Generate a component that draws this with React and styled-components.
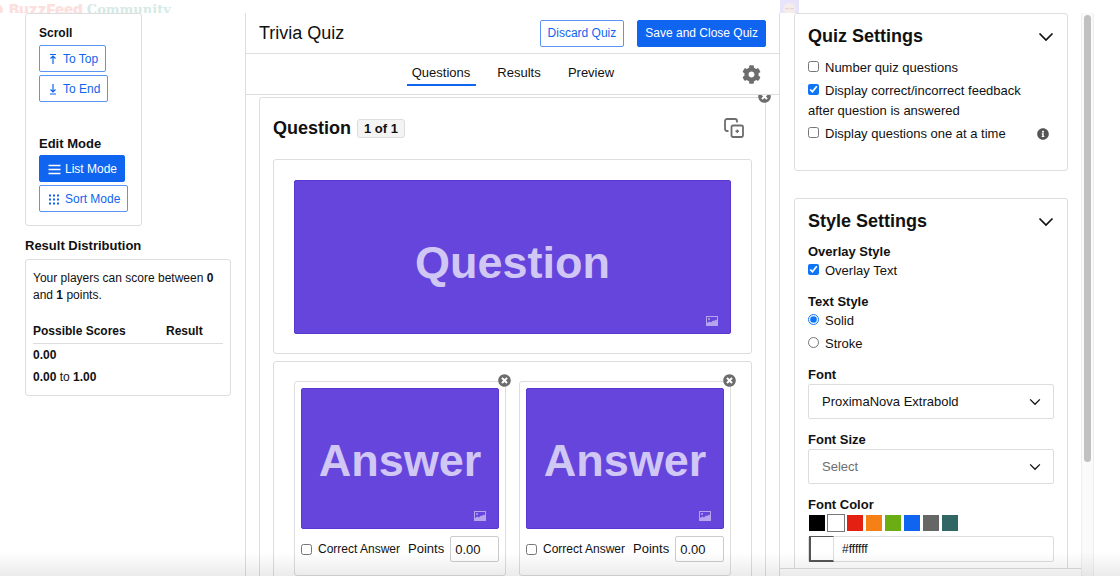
import { useState } from 'react';
import styled, { createGlobalStyle } from 'styled-components';
import { FaCog, FaInfoCircle, FaTimesCircle } from 'react-icons/fa';

//#region --- Styled Components ---
const GlobalStyle = createGlobalStyle`
  *, *::before, *::after {
    box-sizing: border-box;
  }

  body {
    margin: 0;
    background: #fff;
    color: #111;
    font-family: "Liberation Sans", Arial, Helvetica, sans-serif;
    font-size: 13px;
    line-height: 20px;
  }

  h1, h2, h3, h4, p {
    margin: 0;
  }

  button, input, select {
    font-family: inherit;
    color: inherit;
  }
`;

const Page = styled.div`
  position: relative;
  display: flex;
  flex-direction: column;
  height: 100vh;
  overflow: hidden;
`;

const SiteHeader = styled.header`
  display: flex;
  justify-content: space-between;
  flex: 0 0 13px;
  padding-right: 321px;
  overflow: hidden;
`;

const Brand = styled.a`
  display: flex;
  align-items: center;
  gap: 6px;
  height: 19px;
  color: #fce0de;
  font-size: 15px;
  font-weight: 700;
  text-decoration: none;

  svg {
    margin-left: -9px;
  }
  strong {
    font-family: Inter, "Liberation Sans", sans-serif;
    font-weight: 900;
  }
  span {
    margin-left: -2px;
    color: #d5eae6;
    font-family: "DejaVu Serif", serif;
    font-size: 13px;
  }
`;

const Columns = styled.div`
  display: flex;
  flex: 1;
  min-height: 0;
`;

const Sidebar = styled.aside`
  flex: 0 0 245px;
  padding: 0 14px 0 25px;
`;

const Box = styled.section`
  border: 1px solid #ddd;
  border-radius: 3px;
`;

const ToolBox = styled(Box)`
  display: flex;
  flex-direction: column;
  gap: 33px;
  width: 117px;
  padding: 11px 13px 13px;
`;

const ToolGroup = styled.div`
  display: flex;
  flex-direction: column;
  align-items: flex-start;
  gap: 3px;
`;

const ToolTitle = styled.h4`
  font-size: ${({ $small }) => ($small ? 12 : 13)}px;
  line-height: 17px;
`;

const Button = styled.button`
  display: inline-flex;
  align-items: center;
  gap: 4px;
  height: 27px;
  padding: 0 7px;
  border: 1px solid ${({ $filled }) => ($filled ? '#0f65ef' : '#5a95f4')};
  border-radius: 2px;
  background: ${({ $filled }) => ($filled ? '#0f65ef' : '#fff')};
  color: ${({ $filled }) => ($filled ? '#fff' : '#0f65ef')};
  font-size: 12px;
  white-space: nowrap;
  cursor: pointer;
`;

const SectionTitle = styled.h3`
  margin: 11px 0 4px;
  font-size: 13px;
  line-height: 18px;
`;

const ResultBox = styled(Box)`
  padding: 10px 7px 7px;
  font-size: 12px;
  line-height: 17px;
`;

const ScoreTable = styled.table`
  width: 100%;
  margin-top: 18px;
  border-collapse: collapse;
  text-align: left;

  th {
    padding: 1px 0 3px;
    border-bottom: 1px solid #ddd;
  }
  th:first-child {
    width: 70%;
  }
  td {
    padding: 3px 0 2px;
  }
`;

const Editor = styled.main`
  display: flex;
  flex-direction: column;
  flex: 1;
  min-width: 0;
  border: 1px solid #ddd;
  border-width: 0 1px;
`;

const TitleBar = styled.div`
  display: flex;
  align-items: center;
  gap: 13px;
  flex: 0 0 41px;
  padding: 0 13px;
  border-bottom: 1px solid #ddd;

  h1 {
    flex: 1;
    font-size: 18px;
    font-weight: 400;
  }
`;

const TabBar = styled.nav`
  display: flex;
  align-items: center;
  flex: 0 0 41px;
  padding: 0 18px;
  border-bottom: 1px solid #ddd;
`;

const Tabs = styled.div`
  display: flex;
  flex: 1;
  justify-content: center;
  gap: 15px;
  padding-left: 20px;
`;

const Tab = styled.a`
  min-width: ${({ $wide }) => ($wide ? 69 : 57)}px;
  padding: 0 4px 1px;
  border-bottom: 2px solid ${({ $active }) => ($active ? '#0f65ef' : 'transparent')};
  color: #111;
  line-height: 20px;
  text-align: center;
  text-decoration: none;
`;

const IconButton = styled.button`
  display: flex;
  padding: 0;
  border: 0;
  background: none;
  color: ${({ $color }) => $color || '#6d6d6d'};
  cursor: pointer;
`;

const Canvas = styled.div`
  flex: 1;
  min-height: 0;
  padding: 2px 13px 0;
  overflow: hidden;
`;

const Question = styled(Box)`
  position: relative;
  display: flex;
  flex-direction: column;
  gap: 7px;
  min-height: 600px;
  padding: 0 13px;
`;

const Remove = styled(IconButton)`
  position: absolute;
  top: -8px;
  right: -6px;
  border-radius: 50%;
  background: #fff;
`;

const QuestionHeader = styled.div`
  display: flex;
  align-items: center;
  gap: 6px;
  height: 54px;
  padding: 6px 8px 0 0;

  h2 {
    font-size: 18px;
  }
`;

const Count = styled.span`
  padding: 0 6px;
  border: 1px solid #ddd;
  border-radius: 3px;
  background: #f4f4f4;
  font-weight: 700;
  line-height: 17px;
`;

const Spacer = styled.div`
  flex: 1;
`;

const Panel = styled(Box)`
  padding: 20px 20px 19px;
`;

const Answers = styled(Panel)`
  display: grid;
  grid-template-columns: 1fr 1fr;
  gap: 13px;
  padding-top: 19px;
`;

const AnswerCard = styled(Box)`
  position: relative;
  padding: 6px 6px 13px;
`;

const Tile = styled.div`
  position: relative;
  display: flex;
  align-items: center;
  justify-content: center;
  height: ${({ $height }) => $height}px;
  padding-top: ${({ $shift }) => $shift}px;
  border: 1px solid #5938d0;
  border-radius: 2px;
  background: #6645dc;
  color: #d1c7f5;
  font-size: 45px;
  font-weight: 700;
  line-height: 56px;

  svg {
    position: absolute;
    right: 12px;
    bottom: 7px;
  }
`;

const AnswerFooter = styled.div`
  display: flex;
  align-items: center;
  gap: 8px;
  padding-top: 7px;
  white-space: nowrap;
`;

const CheckLabel = styled.label`
  display: flex;
  align-items: center;
  gap: 6px;
  font-size: 12px;
`;

const PointsLabel = styled.label`
  display: flex;
  flex: 1;
  align-items: center;
  gap: 6px;

  input {
    flex: 1;
    min-width: 0;
    width: 0;
    height: 26px;
    padding: 0 4px;
    border: 1px solid #ccc;
    border-radius: 2px;
    font-size: 13px;
  }
`;

const Check = styled.input`
  width: 11px;
  height: 11px;
  margin: 0;
  accent-color: #0f75f5;
`;

const Settings = styled.aside`
  display: flex;
  flex-direction: column;
  flex: 0 0 301px;
  gap: 27px;
  margin-bottom: 7px;
  padding: 0 13px 0 14px;
  border-bottom: 1px solid #ddd;
  overflow: hidden;
`;

const SettingsBox = styled(Box)`
  flex-shrink: 0;
  min-height: ${({ $height }) => $height}px;
  padding: 10px 13px;
`;

const SettingsTitle = styled.div`
  display: flex;
  align-items: center;
  justify-content: space-between;
  margin-bottom: 9px;

  h2 {
    font-size: 18px;
    line-height: 25px;
  }
`;

const Option = styled.div`
  display: flex;
  align-items: flex-start;
  margin-bottom: 3px;
  padding-right: 5px;

  label {
    flex: 1;
  }
  input {
    margin-right: 6px;
  }
  > svg {
    margin-top: 4px;
    color: #555;
  }
`;

const Field = styled.div`
  margin-bottom: 12px;

  h3, > label {
    display: block;
    font-size: 13px;
    font-weight: 700;
    line-height: 18px;
  }
`;

const SelectWrap = styled.div`
  display: flex;
  align-items: center;
  height: 35px;
  padding-right: 12px;
  border: 1px solid #ddd;
  border-radius: 2px;

  select {
    flex: 1;
    height: 100%;
    padding: 0 13px;
    border: 0;
    background: none;
    color: ${({ $muted }) => ($muted ? '#6d6d6d' : '#111')};
    font-size: 13px;
    appearance: none;
  }
`;

const Swatches = styled.div`
  display: flex;
  gap: 1px;
  height: 19px;
`;

const Swatch = styled.button`
  width: 18px;
  height: 18px;
  padding: 0;
  border: 1px solid ${({ $active }) => ($active ? '#777' : '#fff')};
  background: ${({ $color }) => $color};
  cursor: pointer;
`;

const HexRow = styled.div`
  display: flex;
  height: 26px;
  margin-top: 3px;
  border: 1px solid #ddd;
  border-radius: 2px;

  input {
    flex: 1;
    min-width: 0;
    padding: 0 8px;
    border: 0;
    background: none;
    font-size: 12px;
  }
`;

const HexPreview = styled.div`
  width: 25px;
  margin: -1px 0;
  border: 2px solid #555;
  border-width: 1px 1px 2px 2px;
  border-right-color: #ddd;
  background: #fff;
`;

const ScrollTrack = styled.div`
  flex: 0 0 13px;
  margin-right: 26px;
  padding: 2px;
  border: 1px solid #eee;
  border-width: 0 1px;
  background: #fafafa;
`;

const ScrollThumb = styled.div`
  height: 80%;
  border-radius: 4px;
  background: #c1c1c1;
`;

const BottomFade = styled.div`
  position: absolute;
  right: 0;
  bottom: 0;
  left: 0;
  height: 24px;
  background: linear-gradient(rgba(0, 0, 0, 0), rgba(0, 0, 0, 0.08));
  pointer-events: none;
`;
//#endregion

//#region --- Icons ---
const ArrowIcon = ({ down }) => (
  <svg width="12" height="12" viewBox="0 0 12 12" fill="none" stroke="currentColor" strokeWidth="1.2">
    {down ? (
      <path d="M6 1v8M3.5 6.5 6 9l2.5-2.5M3 11h6" />
    ) : (
      <path d="M6 11V3M3.5 5.5 6 3l2.5 2.5M3 1.5h6" />
    )}
  </svg>
);

const ListIcon = () => (
  <svg width="14" height="12" viewBox="0 0 14 12" stroke="currentColor" strokeWidth="1.4">
    <path d="M1.5 2.5h12M1.5 6.5h12M1.5 10.5h12" />
  </svg>
);

const GridIcon = () => (
  <svg width="14" height="12" viewBox="0 0 14 12" stroke="currentColor" strokeWidth="2" strokeDasharray="2 2">
    <path d="M2 2.5h10M2 6.5h10M2 10.5h10" />
  </svg>
);

const Chevron = ({ size = 16, width = 1.7 }) => (
  <svg width={size} height={size} viewBox="0 0 16 16" fill="none" stroke="currentColor" strokeWidth={width} aria-hidden="true">
    <path d="m1.5 4.500 6.500 6.500 6.500-6.500" />
  </svg>
);

const DuplicateIcon = () => (
  <svg width="20" height="20" viewBox="0 0 20 20" fill="none" stroke="currentColor" strokeWidth="1.8">
    <path d="M4.500 13H3a2 2 0 0 1-2-2V3a2 2 0 0 1 2-2h8a2 2 0 0 1 2 2v1.500" />
    <rect x="7.500" y="7.500" width="11.500" height="11.500" rx="1.500" />
    <path d="M13.250 11.500v3.500M11.500 13.250H15" strokeWidth="1.400" />
  </svg>
);

const PictureIcon = () => (
  <svg width="12" height="10" viewBox="0 0 12 10" fill="none">
    <rect x=".5" y=".5" width="11" height="9" stroke="#b5a4ee" />
    <path d="M1 9V7L3.500 5.500 5 6.500l2-2 1 .5 2-1.500 1 1V9z" fill="#b5a4ee" />
    <circle cx="3" cy="3" r="1" fill="#b5a4ee" />
  </svg>
);
//#endregion

const COLORS = ['#000000', '#ffffff', '#e32012', '#f48016', '#6aae14', '#0f65ef', '#666666', '#306764'];

function Answer({ id }) {
  return (
    <AnswerCard>
      <Remove type="button" aria-label="Remove answer"><FaTimesCircle size={13} /></Remove>
      <Tile $height={141} $shift={5}>
        Answer
        <PictureIcon />
      </Tile>
      <AnswerFooter>
        <CheckLabel>
          <Check type="checkbox" id={`correct-${id}`} />
          Correct Answer
        </CheckLabel>
        <PointsLabel>
          Points
          <input type="text" defaultValue="0.00" />
        </PointsLabel>
      </AnswerFooter>
    </AnswerCard>
  );
}

export default function App() {
  const [color, setColor] = useState('#ffffff');

  return (
    <Page>
      <GlobalStyle />

      <SiteHeader>
        <Brand href="#">
          <svg width="12" height="12" viewBox="0 0 12 12">
            <circle cx="6" cy="6" r="6" fill="#fce0de" />
            <path d="m3 8 2-3 1 2 3-4" fill="none" stroke="#fff" />
          </svg>
          <strong>BuzzFeed</strong>
          <span>Community</span>
        </Brand>
        <svg width="19" height="13" viewBox="0 0 19 13">
          <path fill="#e7e3fa" d="M0 0h19v13H0z" />
          <ellipse cx="9.500" cy="9" rx="6.500" ry="6" fill="#f4edec" />
          <path d="M5 9q2-1.500 4 0M10 9q2-1.500 4 0" fill="none" stroke="#ddd3d3" />
        </svg>
      </SiteHeader>

      <Columns>
        <Sidebar>
          <ToolBox>
            <ToolGroup>
              <ToolTitle $small>Scroll</ToolTitle>
              <Button type="button"><ArrowIcon /> To Top</Button>
              <Button type="button"><ArrowIcon down /> To End</Button>
            </ToolGroup>
            <ToolGroup>
              <ToolTitle>Edit Mode</ToolTitle>
              <Button type="button" $filled><ListIcon /> List Mode</Button>
              <Button type="button"><GridIcon /> Sort Mode</Button>
            </ToolGroup>
          </ToolBox>

          <SectionTitle>Result Distribution</SectionTitle>
          <ResultBox>
            <p>Your players can score between <b>0</b> and <b>1</b> points.</p>
            <ScoreTable>
              <thead>
                <tr><th>Possible Scores</th><th>Result</th></tr>
              </thead>
              <tbody>
                <tr><td><b>0.00</b></td><td /></tr>
                <tr><td><b>0.00</b> to <b>1.00</b></td><td /></tr>
              </tbody>
            </ScoreTable>
          </ResultBox>
        </Sidebar>

        <Editor>
          <TitleBar>
            <h1>Trivia Quiz</h1>
            <Button type="button">Discard Quiz</Button>
            <Button type="button" $filled>Save and Close Quiz</Button>
          </TitleBar>
          <TabBar>
            <Tabs>
              <Tab href="#questions" $active $wide>Questions</Tab>
              <Tab href="#results">Results</Tab>
              <Tab href="#preview">Preview</Tab>
            </Tabs>
            <IconButton type="button" aria-label="Options"><FaCog size={19} /></IconButton>
          </TabBar>

          <Canvas>
            <Question>
              <Remove type="button" aria-label="Remove question"><FaTimesCircle size={13} /></Remove>
              <QuestionHeader>
                <h2>Question</h2>
                <Count>1 of 1</Count>
                <Spacer />
                <IconButton type="button" aria-label="Duplicate question"><DuplicateIcon /></IconButton>
              </QuestionHeader>
              <Panel>
                <Tile $height={154} $shift={12}>
                  Question
                  <PictureIcon />
                </Tile>
              </Panel>
              <Answers>
                <Answer id="a" />
                <Answer id="b" />
              </Answers>
            </Question>
          </Canvas>
        </Editor>

        <Settings>
          <SettingsBox $height={158}>
            <SettingsTitle>
              <h2>Quiz Settings</h2>
              <IconButton type="button" $color="#111" aria-label="Toggle quiz settings"><Chevron /></IconButton>
            </SettingsTitle>
            <Option>
              <label><Check type="checkbox" />Number quiz questions</label>
            </Option>
            <Option>
              <label><Check type="checkbox" defaultChecked />Display correct/incorrect feedback after question is answered</label>
            </Option>
            <Option>
              <label><Check type="checkbox" />Display questions one at a time</label>
              <FaInfoCircle size={12} />
            </Option>
          </SettingsBox>

          <SettingsBox $height={420}>
            <SettingsTitle>
              <h2>Style Settings</h2>
              <IconButton type="button" $color="#111" aria-label="Toggle style settings"><Chevron /></IconButton>
            </SettingsTitle>
            <Field>
              <h3>Overlay Style</h3>
              <Option>
                <label><Check type="checkbox" defaultChecked />Overlay Text</label>
              </Option>
            </Field>
            <Field>
              <h3>Text Style</h3>
              <Option>
                <label><Check type="radio" name="text-style" defaultChecked />Solid</label>
              </Option>
              <Option>
                <label><Check type="radio" name="text-style" />Stroke</label>
              </Option>
            </Field>
            <Field>
              <label htmlFor="font">Font</label>
              <SelectWrap>
                <select id="font"><option>ProximaNova Extrabold</option></select>
                <Chevron size={12} />
              </SelectWrap>
            </Field>
            <Field>
              <label htmlFor="font-size">Font Size</label>
              <SelectWrap $muted>
                <select id="font-size"><option>Select</option></select>
                <Chevron size={12} />
              </SelectWrap>
            </Field>
            <Field>
              <label htmlFor="font-color">Font Color</label>
              <Swatches>
                {COLORS.map((c) => (
                  <Swatch
                    key={c}
                    type="button"
                    aria-label={c}
                    $color={c}
                    $active={c === color}
                    onClick={() => setColor(c)}
                  />
                ))}
              </Swatches>
              <HexRow>
                <HexPreview />
                <input id="font-color" type="text" value={color} onChange={(e) => setColor(e.target.value)} />
              </HexRow>
            </Field>
          </SettingsBox>
        </Settings>

        <ScrollTrack><ScrollThumb /></ScrollTrack>
      </Columns>
      <BottomFade />
    </Page>
  );
}
